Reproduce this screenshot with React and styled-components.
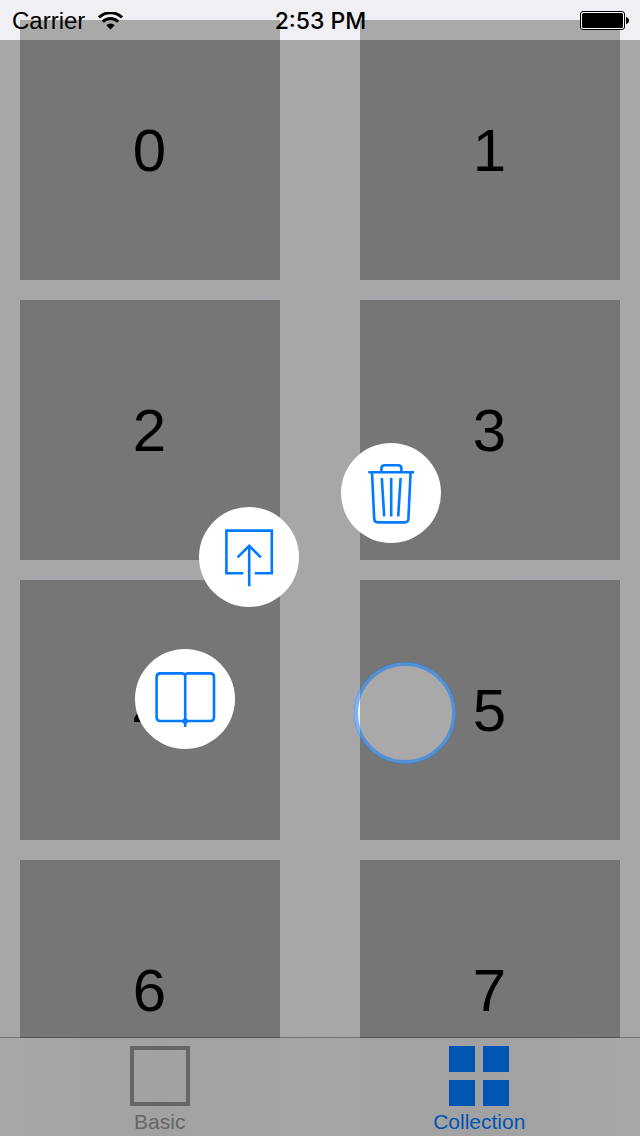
import React from 'react';
import styled, { createGlobalStyle } from 'styled-components';

const GlobalStyle = createGlobalStyle`
  *, *::before, *::after { box-sizing: border-box; }
  body {
    margin: 0;
    background: #efeff4;
    color: #000;
    font-family: "Liberation Sans", Arial, sans-serif;
  }
  button { font: inherit; color: inherit; border: 0; padding: 0; cursor: pointer; }
`;

const Screen = styled.div`
  position: relative;
  display: flex;
  flex-direction: column;
  height: 100vh;
  overflow: hidden;
`;

const StatusBar = styled.header`
  position: absolute;
  inset: 0 0 auto;
  z-index: 2;
  display: grid;
  grid-template-columns: 1fr auto 1fr;
  align-items: center;
  height: 40px;
  padding: 1px 11px 0 12px;
  font-size: 24px;
  line-height: 28px;
`;

const Carrier = styled.div`
  display: flex;
  align-items: center;
  gap: 13px;
`;

const Time = styled.time`
  font-family: Inter, "Liberation Sans", sans-serif;
  font-size: 23px;
  font-weight: 500;
`;

const Battery = styled.svg`
  justify-self: end;
`;

const Collection = styled.main`
  flex: 1;
  min-height: 0;
  margin-bottom: -1px;
  overflow-y: auto;
  scrollbar-width: none;
`;

const Grid = styled.ul`
  display: grid;
  grid-template-columns: repeat(auto-fill, 260px);
  justify-content: space-between;
  gap: 20px;
  margin: 0;
  padding: 20px;
  list-style: none;
`;

const Cell = styled.li`
  display: flex;
  align-items: center;
  justify-content: center;
  height: 260px;
  padding: 2px 1px 0 0;
  background: #a9a9a9;
  font-size: 60px;
  line-height: 68px;
`;

const TabBar = styled.nav`
  position: relative;
  display: flex;
  padding-right: 1px;
  border-top: 1px solid rgba(0, 0, 0, 0.3);
  background: linear-gradient(90deg, #f0f0f0, #e7e7e7 25%, #ededed 50%, #e7e7e7 75%, #f0f0f0) padding-box;
`;

const Tab = styled.button`
  flex: 1;
  display: flex;
  flex-direction: column;
  align-items: center;
  gap: 4px;
  padding: 8px 0 2px;
  background: none;
  color: ${({ $active }) => ($active ? '#007aff' : '#929292')};
  font-size: 21px;
  line-height: 24px;
`;

const Dim = styled.div`
  position: absolute;
  inset: 40px 0 0;
  z-index: 3;
  background: radial-gradient(
    circle at calc(50% + 85px) 673px,
    transparent 50px,
    rgba(0, 0, 0, 0.3) 51px
  );
`;

const ContextMenu = styled.div`
  position: absolute;
  top: 713px;
  left: calc(50% + 85px);
  z-index: 4;
`;

const TouchRing = styled.div`
  position: absolute;
  top: -51px;
  left: -51px;
  width: 102px;
  height: 102px;
  border: 4px solid rgba(0, 122, 255, 0.5);
  border-radius: 50%;
`;

const Action = styled.button`
  position: absolute;
  top: ${({ $y }) => $y - 50}px;
  left: ${({ $x }) => $x - 50}px;
  width: 100px;
  height: 100px;
  border-radius: 50%;
  background: #fff;
  color: #007aff;

  svg { display: block; }
`;

const Glyph = ({ children }) => (
  <svg width="100" height="100" viewBox="0 0 100 100" fill="none" stroke="currentColor" strokeWidth="2.6" aria-hidden="true">
    {children}
  </svg>
);

const BookIcon = () => (
  <Glyph>
    <path d="M50.2 26.2C49.4 24.9 48.4 24.4 47 24.4H25.2Q21.6 24.4 21.6 28.2V68.2Q21.6 72 25.2 72H47Q49 72 50.2 74.5Q51 72 53 72H75.2Q79 72 79 68.2V28.2Q79 24.4 75.2 24.4H53C51.6 24.4 50.6 24.9 50.2 26.2V78" />
    <path d="M50.2 68L54 72L50.2 76L46.4 72Z" fill="currentColor" stroke="none" />
  </Glyph>
);

const ShareIcon = () => (
  <Glyph>
    <path d="M44.3 66.2H27.4V23.6H72.8V66.2H55.7M50.2 79.3V38.8M38.6 50.4L50.2 38.8L61.8 50.4" />
  </Glyph>
);

const TrashIcon = () => (
  <Glyph>
    <path d="M27.3 29.2H73M40.4 29V25.4Q40.4 22.2 43.6 22.2H57.2Q60.4 22.2 60.4 25.4V29" />
    <path d="M31 29.2L33.2 76Q33.4 79.4 36.8 79.4H63.8Q67.2 79.4 67.4 76L69.6 29.2" />
    <path d="M40.8 35L43.2 73.4M50.2 35V73.4M59.6 35L57.2 73.4" />
  </Glyph>
);

const WifiIcon = () => (
  <svg width="25" height="18" viewBox="0 0 25 18" fill="none" stroke="#000" strokeWidth="2.9" role="img" aria-label="Wi-Fi">
    <path d="M1 5.4A16.4 16.4 0 0 1 24 5.4" />
    <path d="M4.8 9.8A10.8 10.8 0 0 1 20.2 9.8" />
    <path d="M8.3 13.3A6 6 0 0 1 16.7 13.3L12.5 17.6Z" fill="#000" stroke="none" />
  </svg>
);

const BasicIcon = () => (
  <svg width="60" height="60" fill="none" stroke="currentColor" strokeWidth="4" aria-hidden="true">
    <rect x="2" y="2" width="56" height="56" />
  </svg>
);

const CollectionIcon = () => (
  <svg width="60" height="60" fill="currentColor" aria-hidden="true">
    <path d="M0 0h26v26H0zM34 0h26v26H34zM0 34h26v26H0zM34 34h26v26H34z" />
  </svg>
);

const items = [0, 1, 2, 3, 4, 5, 6, 7];

const actions = [
  { label: 'Read', x: -220, y: -14, Icon: BookIcon },
  { label: 'Share', x: -156, y: -156, Icon: ShareIcon },
  { label: 'Delete', x: -14, y: -220, Icon: TrashIcon },
];

export default function App() {
  return (
    <>
      <GlobalStyle />
      <Screen>
        <StatusBar>
          <Carrier>
            Carrier
            <WifiIcon />
          </Carrier>
          <Time>2:53 PM</Time>
          <Battery width="49" height="19" viewBox="0 0 49 19" role="img" aria-label="Battery full">
            <rect x="0.5" y="0.5" width="44" height="18" rx="2.5" fill="#fff" stroke="#000" />
            <rect x="2" y="2" width="41" height="15" rx="1.5" />
            <path d="M46 6Q49 7 49 9.5Q49 12 46 13Z" />
          </Battery>
        </StatusBar>
        <Collection>
          <Grid>
            {items.map((n) => (
              <Cell key={n}>{n}</Cell>
            ))}
          </Grid>
        </Collection>
        <TabBar>
          <Tab type="button">
            <BasicIcon />
            Basic
          </Tab>
          <Tab type="button" $active aria-current="page">
            <CollectionIcon />
            Collection
          </Tab>
        </TabBar>
        <Dim />
        <ContextMenu>
          <TouchRing />
          {actions.map(({ label, x, y, Icon }) => (
            <Action key={label} type="button" aria-label={label} $x={x} $y={y}>
              <Icon />
            </Action>
          ))}
        </ContextMenu>
      </Screen>
    </>
  );
}
